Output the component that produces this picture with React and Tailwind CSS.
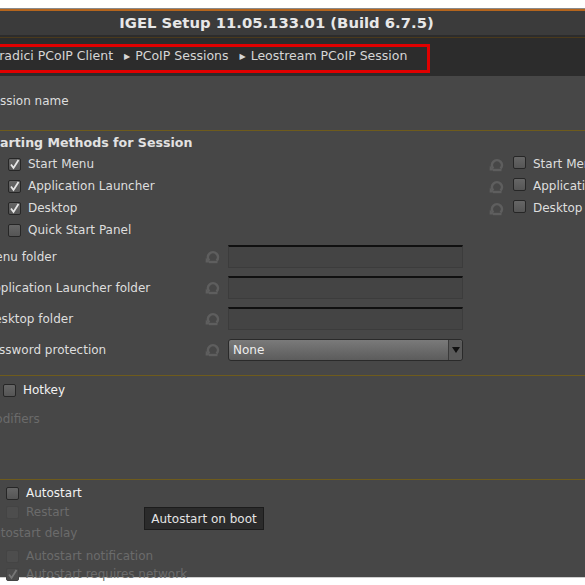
import React from "react";

const font = { fontFamily: '"DejaVu Sans", "Liberation Sans", sans-serif' };

function ResetIcon() {
  return (
    <svg width="16" height="15" viewBox="0 0 16 15" className="shrink-0">
      <path
        d="M4.3 11.6 A5 5 0 1 1 11.6 11.6"
        fill="none"
        stroke="#5e5e5e"
        strokeWidth="2.6"
      />
      <path d="M0.8 8.6 L5 13.6 L0.6 13.6 Z" fill="#5e5e5e" />
      <path d="M4 13 H12.5" stroke="#5e5e5e" strokeWidth="2.4" />
    </svg>
  );
}

function Box({ checked, dim }) {
  return (
    <span
      className={`relative inline-flex h-[13px] w-[13px] shrink-0 items-center justify-center rounded-[2px] border ${
        dim
          ? "border-[#444] bg-[#4d4d4d]"
          : "border-[#262626] bg-gradient-to-b from-[#666] to-[#555]"
      }`}
    >
      {checked && (
        <svg width="11" height="11" viewBox="0 0 11 11">
          <path
            d="M2 5.5 L4.5 9 L9.5 1"
            fill="none"
            stroke={dim ? "#777" : "#e6e6e6"}
            strokeWidth="1.8"
          />
        </svg>
      )}
    </span>
  );
}

function Check({ label, checked, dim, bright }) {
  return (
    <div className="flex h-[22px] items-center gap-[7px]">
      <Box checked={checked} dim={dim} />
      <span
        className={`text-[12px] ${
          dim ? "text-[#6b6b6b]" : bright ? "text-[#f2f2f2]" : "text-[#dedede]"
        }`}
      >
        {label}
      </span>
    </div>
  );
}

function Field({ label, select }) {
  return (
    <div className="flex h-[23px] items-center">
      <span className="w-[220px] shrink-0 text-[12px] text-[#dedede]">{label}</span>
      <ResetIcon />
      <div className="ml-[7px] w-[235px] shrink-0">
        {select ? (
          <div className="flex h-[22px] items-center rounded-[3px] border border-[#2a2a2a] bg-gradient-to-b from-[#7a7a7a] to-[#5c5c5c]">
            <span className="flex-1 pl-[4px] text-[12px] text-[#eeeeee]">None</span>
            <span className="flex h-full w-[14px] items-center justify-center rounded-r-[3px] border-l border-[#3a3a3a] bg-[#5a5a5a]">
              <svg width="8" height="6" viewBox="0 0 8 6">
                <path d="M0 0 H8 L4 6 Z" fill="#111" />
              </svg>
            </span>
          </div>
        ) : (
          <div className="h-[23px] border border-[#3c3c3c] border-t-2 border-t-[#101010] bg-[#444444]" />
        )}
      </div>
    </div>
  );
}

function Rule() {
  return <div className="h-px w-[620px] bg-[#6e5b1c]" />;
}

export default function App() {
  return (
    <div className="relative h-[585px] w-[585px] overflow-hidden bg-white" style={font}>
      {/* title bar */}
      <div className="h-[8px] bg-white" />
      <div className="h-px bg-[#8a8a8a]" />
      <div className="flex h-[26px] items-center justify-center border-t-2 border-[#b5651d] bg-[#3b3b3b] pr-[32px]">
        <span className="text-[14.8px] font-bold text-[#e8e8e8]">
          IGEL Setup 11.05.133.01 (Build 6.7.5)
        </span>
      </div>

      {/* breadcrumb */}
      <div className="h-[41px] bg-[#2c2c2c] pt-[2px]">
        <div className="h-px bg-[#4b3a1c]" />
        <div className="mt-[6px] ml-[-25px] flex h-[29px] w-[455px] items-center border-[3px] border-[#e00000] pb-[4px] pl-[8px]">
          <span className="text-[12.5px] text-[#d6d6d6]">Teradici PCoIP Client</span>
          <span className="ml-[11px] text-[8px] text-[#d6d6d6]">▶</span>
          <span className="ml-[5px] text-[12.5px] text-[#d6d6d6]">PCoIP Sessions</span>
          <span className="ml-[11px] text-[8px] text-[#d6d6d6]">▶</span>
          <span className="ml-[5px] text-[12.5px] text-[#d6d6d6]">Leostream PCoIP Session</span>
        </div>
      </div>

      {/* main area */}
      <div className="relative h-[501px] bg-[#474747] pt-[14px]">
        <div className="ml-[-15px]">
          <div className="flex h-[22px] items-center text-[12px] text-[#dedede]">Session name</div>
          <div className="mt-[18px]">
            <Rule />
          </div>
          <div className="mt-[2px] flex h-[20px] items-center text-[12.6px] font-bold text-[#e2e2e2]">
            Starting Methods for Session
          </div>
          <div className="flex">
            <div className="w-[490px] shrink-0 pl-[23px]">
              <Check label="Start Menu" checked />
              <Check label="Application Launcher" checked />
              <Check label="Desktop" checked />
              <Check label="Quick Start Panel" />
            </div>
            <div className="w-[130px] shrink-0 pl-[14px]">
              {["Start Menu", "Application Launcher", "Desktop"].map((t) => (
                <div key={t} className="flex h-[22px] items-center">
                  <ResetIcon />
                  <span className="ml-[8px]">
                    <Box />
                  </span>
                  <span className="ml-[7px] whitespace-nowrap text-[12px] text-[#dedede]">{t}</span>
                </div>
              ))}
            </div>
          </div>

          <div className="mt-[4px] flex flex-col gap-[8px]">
            <Field label="Menu folder" />
            <Field label="Application Launcher folder" />
            <Field label="Desktop folder" />
            <Field label="Password protection" select />
          </div>

          <div className="mt-[14px]">
            <Rule />
          </div>
          <div className="mt-[3px] pl-[18px]">
            <Check label="Hotkey" bright />
          </div>
          <div className="mt-[7px] flex h-[22px] items-center text-[12px] text-[#6b6b6b]">Modifiers</div>

          <div className="mt-[49px]">
            <Rule />
          </div>
          <div className="mt-[2px] pl-[21px]">
            <div className="h-[20px]">
              <Check label="Autostart" bright />
            </div>
            <div className="h-[18px] -mt-[1px]">
              <Check label="Restart" dim />
            </div>
          </div>
          <div className="mt-[3px] flex h-[22px] items-center text-[12px] text-[#6b6b6b]">Autostart delay</div>
          <div className="mt-[1px] pl-[21px]">
            <Check label="Autostart notification" dim />
            <div className="-mt-[4px]">
              <Check label="Autostart requires network" dim checked />
            </div>
          </div>
        </div>

        {/* tooltip */}
        <div className="absolute left-[144px] top-[431px] flex h-[23px] w-[120px] items-center justify-center border border-[#1c1c1c] bg-[#2b2b2b] text-[12px] text-[#e4e4e4]">
          Autostart on boot
        </div>
      </div>
      <div className="h-px bg-[#cfcfcf]" />
    </div>
  );
}
